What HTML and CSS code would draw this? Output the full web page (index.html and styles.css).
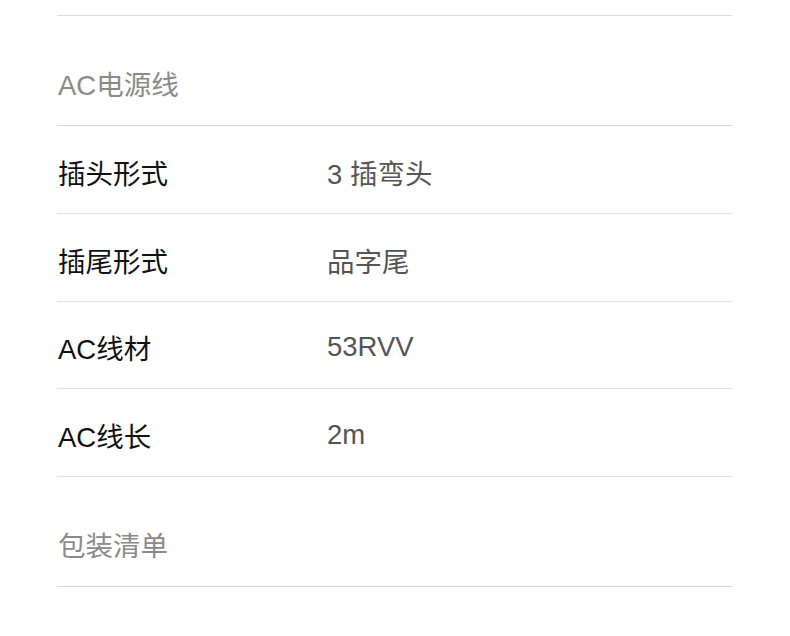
FILE: index.html
```html
<!DOCTYPE html>
<html lang="zh-CN">
<head>
    <meta charset="UTF-8">
    <meta name="viewport" content="width=device-width, initial-scale=1.0">
    <title>规格参数</title>
    <link rel="stylesheet" href="styles.css">
</head>
<body>
<!-- Spec table ---------------------------------------------------------------->
 <div class="spec">
    <h2 class="spec-title">AC电源线</h2>
    <div class="spec-row">
        <span class="spec-label">插头形式</span>
        <span class="spec-value">3 插弯头</span>
    </div>
    <div class="spec-row">
        <span class="spec-label">插尾形式</span>
        <span class="spec-value">品字尾</span>
    </div>
    <div class="spec-row">
        <span class="spec-label">AC线材</span>
        <span class="spec-value">53RVV</span>
    </div>
    <div class="spec-row">
        <span class="spec-label">AC线长</span>
        <span class="spec-value">2m</span>
    </div>
    <h2 class="spec-title">包装清单</h2>
 </div>
</body>
</html>
```
FILE: styles.css
```css
body {
  margin: 0;
  padding-top: 15px;
  background-color: #fff;
  font-family: "Liberation Sans", "Noto Sans CJK SC", sans-serif;
}
.spec {
  margin-left: 57px;
  width: 675px;
  border-top: 1px solid #dcdcdc;
}
.spec-title {
  margin: 0;
  height: 110px;
  display: flex;
  align-items: center;
  padding-top: 24px;
  padding-left: 1px;
  box-sizing: border-box;
  font-size: 27.5px;
  font-weight: normal;
  color: #8a8a8a;
  border-bottom: 1px solid #d8d8d8;
}
.spec-row {
  height: 87.8px;
  display: flex;
  align-items: center;
  padding-top: 5px;
  box-sizing: border-box;
  font-size: 27.5px;
  border-bottom: 1px solid #e2e2e2;
}
.spec-label {
  width: 269px;
  padding-left: 1px;
  color: #111;
}
.spec-value {
  color: #555;
}
```
